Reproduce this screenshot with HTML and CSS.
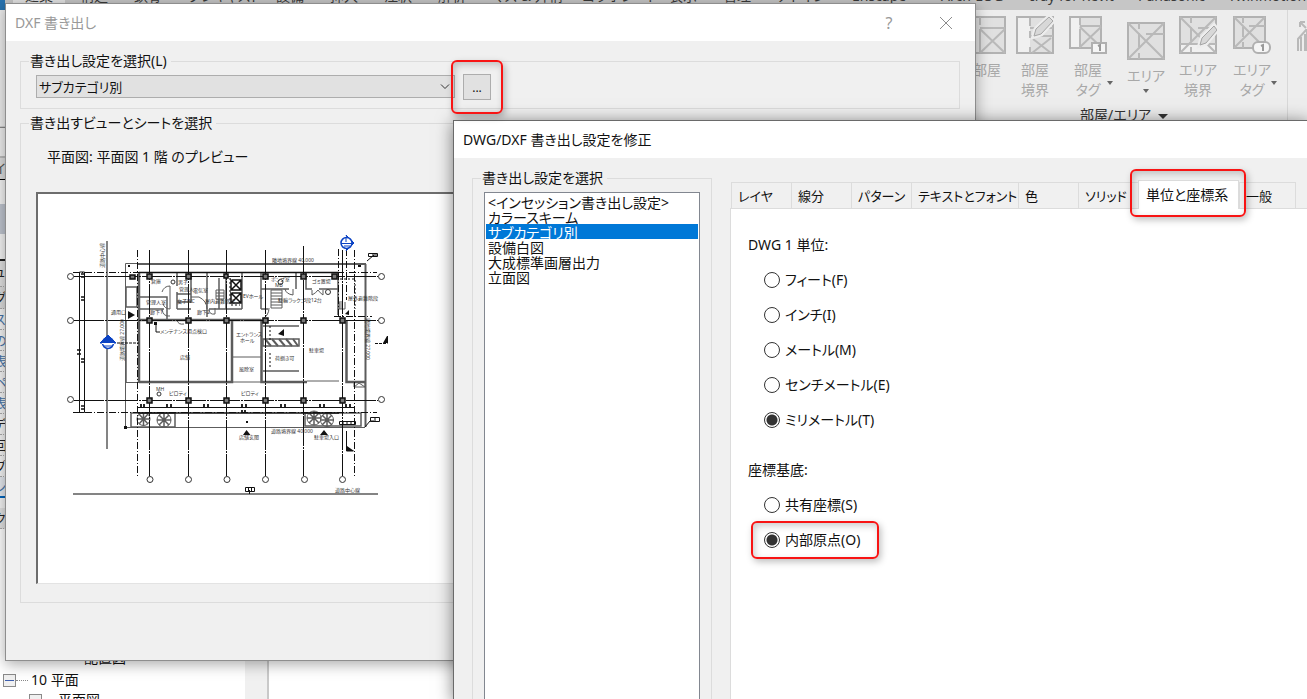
FILE: index.html
```html
<!DOCTYPE html>
<html lang="ja">
<head>
<meta charset="utf-8">
<title>DWG/DXF 書き出し設定を修正</title>
<link rel="stylesheet" href="styles.css">
</head>
<body>
<div class="desktop">
  <header class="ribbon">
    <nav class="ribbon-tabs"><div class="ribbon-tab-list">
      <a href="#" class="current">建築</a><a href="#">構造</a><a href="#">鉄骨</a><a href="#">プレキャスト</a><a href="#">設備</a><a href="#">挿入</a><a href="#">注釈</a><a href="#">解析</a><a href="#">マス &amp; 外構</a><a href="#">コラボレート</a><a href="#">表示</a><a href="#">管理</a><a href="#">アドイン</a><a href="#">Enscape</a><a href="#">Arch-LOG</a><a href="#">Iray for Revit</a><a href="#">Panasonic</a><a href="#">Twinmotion</a>
    </div></nav>
    <div class="ribbon-main">
      <div class="ribbon-group">
        <div class="tools">
          <button class="tool"><svg width="38" height="40" viewBox="0 0 38 40"><path class="plan" d="M1 1h36v36H1z"/><path class="wall" d="M12 1v8m0 4v24M12 12h25M12 13l25 24M37 13L12 37"/></svg><span>部屋</span></button>
          <button class="tool"><svg width="38" height="40" viewBox="0 0 38 40"><path class="plan" d="M1 1h36v36H1z"/><path class="pale" d="M2 2h12v34H2z"/><path class="wall" d="M14 2v8m0 5v7m0 9v6M14 12h23M14 20h23M17 23l18 14M35 22L16 37"/><path class="halo" d="M18 20l2-7L33 1l4 4-12 13z"/><path class="pencil" d="M18 20l2-7L33 1l4 4-12 13z"/></svg><span>部屋<br>境界</span></button>
          <button class="tool"><svg width="38" height="40" viewBox="0 0 38 40"><path class="plan" d="M1 1h31v31H1z"/><path class="pale" d="M2 2h8v29H2z"/><path class="wall" d="M11 2v7m0 4v19M11 10h21M11 11l21 20M32 11L11 31"/><path class="tag" d="M23 27h14v10H23z"/><path class="num" d="M29 30l2-1v6"/></svg><span>部屋<br>タグ</span><i></i></button>
          <button class="tool low"><svg width="38" height="40" viewBox="0 0 38 40"><path class="plan" d="M1 1h36v36H1z"/><path class="wall" d="M12 1v6m0 4v14m0 6v6M19 12h18M1 1l36 36M37 1L1 37"/></svg><span>エリア</span><i></i></button>
          <button class="tool"><svg width="38" height="40" viewBox="0 0 38 40"><path class="plan" d="M1 1h36v36H1z"/><path class="pale" d="M2 28h34v8H2z"/><path class="wall" d="M12 1v6m0 4v14m0 6v6M19 12h18M1 28h36M1 1l36 36M37 1L1 37"/><path class="halo" d="M21 29l2-7 12-12 3 4-11 13z"/><path class="pencil" d="M21 29l2-7 12-12 3 4-11 13z"/></svg><span>エリア<br>境界</span></button>
          <button class="tool"><svg width="38" height="40" viewBox="0 0 38 40"><path class="plan" d="M1 1h31v31H1z"/><path class="wall" d="M10 1v6m0 4v10m0 5v6M16 10h16M1 1l31 31M32 1L1 32"/><rect class="tag" x="20" y="26" width="17" height="11" rx="5"/><path class="num" d="M28 30l2-1v6"/></svg><span>エリア<br>タグ</span><i></i></button>
        </div>
        <div class="group-name">部屋/エリア <i></i></div>
      </div>
      <div class="ribbon-next"><svg width="13" height="60" viewBox="0 0 13 60"><path class="wall" d="M3 41V29l8-9h2M6 41V27m4 14V24m2 17V21M5 12h5M5 12v5M5 12l6 6"/></svg></div>
    </div>
  </header>

  <aside class="properties">
    <div class="prop-head">ー</div><div class="prop-bar">イ</div><div class="prop-view"></div><div class="prop-title">ュ</div>
    <div class="prop-row first">グ</div><div class="prop-row">ス</div><div class="prop-row">の</div><div class="prop-row">表</div><div class="prop-row">ペ</div><div class="prop-row">表</div><div class="prop-row dark">デ</div><div class="prop-row dark">回</div><div class="prop-row dark">プ</div><div class="prop-row link">ン</div><div class="prop-foot">ク</div>
  </aside>

  <section class="browser">
    <div class="tree">
      <div class="leaf">配置図</div>
      <div class="branch"><button class="toggle" aria-label="10 平面 を閉じる"></button><span class="dots"></span>10 平面</div>
      <div class="branch child"><button class="toggle" aria-label="平面図 を閉じる"></button>平面図</div>
    </div>
    <div class="gutter"></div>
  </section>

  <section class="dialog export" role="dialog" aria-labelledby="export-title">
    <div class="titlebar"><h2 id="export-title">DXF 書き出し</h2><button class="help" aria-label="ヘルプ">?</button><button class="close" aria-label="閉じる"><svg width="14" height="14" viewBox="0 0 14 14"><path d="M1 1l12 12M13 1L1 13" fill="none" stroke="#8c8c8c"/></svg></button></div>
    <div class="export-body">
      <fieldset class="setup">
        <legend><label for="setup">書き出し設定を選択(L)</label></legend>
        <select id="setup"><option>サブカテゴリ別</option></select>
        <span class="marked more"><button aria-label="設定を修正">...</button></span>
      </fieldset>
      <fieldset class="views">
        <legend>書き出すビューとシートを選択</legend>
        <p>平面図: 平面図 1 階 のプレビュー</p>
        <div class="preview">
<svg class="plan-view" width="416" height="391" viewBox="39 194 416 391" role="img" aria-label="平面図 1 階">
<g class="g">
<path d="M108 241V449M74 494H379" stroke-width="1.5"/>
<path d="M126.500 263.500H139M126.500 263.500V427.500H366M126.500 382.500H139"/>
<path d="M127 287H138V307H127zM127 320V382" stroke-width="1.500"/>
<path d="M139 264H367M366.500 264V382M366.500 382V427" stroke-width="2"/>
<path d="M140 273V383M140 320H233V382H140M262.500 320V382H308M347.500 320V382H366M232 320H262" stroke-width="2.500"/>
<path d="M233 357H262M233 382H262M308 381H340" stroke-width="1"/>
<path d="M178 273V286M178 292V309M192 273V303M208 273V317M220 278V309M227 273V309M140 297H168V320M140 309H165M178 294H192M178 302H192M178 309H192M210 309H243M243 273V309M262 273V309M262 289H290M297 273V289M307 273V289H313M320 289H339M339 273V315M262 309H269" stroke-width="1.500"/>
<path d="M163 292q2-6 8-6v23q-5 0-7-5M163 309q1 8 8 7M192 297h8q8 4 8 12M178 320q1 5 7 4M210 309q0 6 6 5v-6M262 320q8-4 8-12M286 289q1 5 8 6v-6M313 290v5q4-2 6-5 2 3 5 5v-5M355 382v5h11v-5M355 387l5-4 6 4"/>
<path d="M272 290H283V308H272zM272 293H283M272 296H283M272 299H283M272 302H283M272 305H283M217 290v9h8v-9zM217 293h8M217 296h8M340 302v7h6v-7M341 301v8M343 301v8"/>
<path d="M264 326H300M264 371H300M264 339H300V346H264z" stroke-width="1.500"/>
<path d="M266 339l6 7M273 339l6 7M280 339l6 7M287 339l6 7M294 339l5 7" stroke-width="2"/>
<path d="M132 413H176V427H132zM306 413H362V426H306z" stroke-width="1.500"/>
<circle cx="144.500" cy="419" r="6.500"/><circle cx="165" cy="420" r="7"/><circle cx="315" cy="418" r="7"/><circle cx="328" cy="420" r="6.500"/>
<path stroke-width="1.500" d="M138 419h13M144.500 412v14M140 414l9 10M149 414l-9 10M158 420h14M165 413v14M160 415l10 10M170 415l-10 10M308 418h14M315 411v14M310 413l10 10M320 413l-10 10M322 420h13M328 413v14M323 415l10 10M333 415l-10 10"/>
</g>
<g class="k">
<path class="dd" d="M150.500 250V476M189.500 250V476M227.500 250V476M266.500 250V476M304.500 246V476M343.500 250V476M75 276.500H379M75 320.500H379M75 400.500H379"/>
<path class="da" d="M138.500 250V478M339.500 249V318M347.500 249V300M355.500 250V478M74 272.500H378M74 412.500H378M335 316.500H373"/>
<path d="M80.500 272V412.500H85.500V272zM139 407.500H356"/>
<path d="M139 413H340M140 272.500H340" stroke-width="1.500"/>
<path d="M82 274h4m-4 3h4m-4 20h4m-4 3h4m-8 50h4m-4 4h4m0 5h4m-4 3h4m-4 44h4m-4 3h4" stroke-width="1.500"/>
<path d="M142 404v3m3-3v3m23-3v3m4-3v3m33-3v3m4-3v3m34-3v3m4-3v3m35-3v3m4-3v3m35-3v3m4-3v3m22-3v3m4-3v3M243 410v3m3-3v3" stroke-width="1.800"/>
<path d="M233 280H242V290H232V280l10 10m0-10l-10 10M233 293H242V303H232V293l10 10m0-10l-10 10" stroke-width="1.500"/>
<path d="M231 278V305H241M271 326V341M271 353V367M341 279H356V309" stroke-dasharray="2 2"/>
<path d="M118 343H140M376 343.500H388" stroke-dasharray="3 1"/>
<path d="M368 261l7-6h4M157 323v9h4M347.500 431v20h7M366 427l5-6h4M388.500 343.500V336M250.500 490v4"/>
<path d="M369.500 253.500h9v3h-9zM371.500 417.500h9v4h-9zM340.500 421.500h16v3h-16zM246.500 487.500h9v4h-9zM249.500 488v3M252.500 488v3M344 421v3M348 421v3M352 421v3M374 253v3M376 417v4"/>
<path fill="#111" stroke="none" d="M129 311v8l7-4zM279 334l6-5v7zM346 314l4-4v5zM244 435l3.500-5 4 5zM321 435l4-5 4 5zM348 446l7 5h-7zM388 336v7h-4zM129 265h2v2h-2zM359 265h3v2h-3zM247 421h2v2h-2zM155 322h3v3h-3zM125 426h3v3h-3z"/>
</g>
<g class="col"><path d="M148 274h5v5h-5zM187 274h5v5h-5zM225 274h4v4h-4zM264 274h5v5h-5zM302 274h5v5h-5zM333 274h5v5h-5zM148 318h5v5h-5zM187 318h5v5h-5zM225 318h5v5h-5zM264 318h5v5h-5zM302 318h5v5h-5zM341 318h5v5h-5zM148 398h5v5h-5zM187 398h5v5h-5zM225 398h5v5h-5zM264 398h5v5h-5zM302 398h5v5h-5zM341 398h5v5h-5zM131 275h5v4h-5z"/></g>
<g class="bub"><circle cx="71.500" cy="276.500" r="3"/><circle cx="71.500" cy="320.500" r="3"/><circle cx="71.500" cy="399.500" r="3"/><circle cx="382.500" cy="276.500" r="3"/><circle cx="382.500" cy="320.500" r="3"/><circle cx="382.500" cy="399.500" r="3"/><circle cx="151" cy="479.500" r="3"/><circle cx="189.500" cy="479.500" r="3"/><circle cx="228" cy="479.500" r="3"/><circle cx="266.500" cy="479.500" r="3"/><circle cx="305.500" cy="479.500" r="3"/><circle cx="343.500" cy="479.500" r="3"/><circle cx="160" cy="394" r="2"/><circle cx="174" cy="282" r="2"/><circle cx="281.500" cy="282" r="2.500"/><circle cx="329" cy="292" r="2.500"/></g>
<g class="sec"><circle cx="109" cy="343" r="5.500"/><path d="M101 343l8-8 8 8z"/><path class="o" d="M103 343.500h12"/><path class="b" d="M105 346h8"/><path d="M347 235l8 8-8 8 4-8z"/><circle cx="347.500" cy="243" r="5.500"/><path class="b" d="M342 243.500h13M345 246h6M347 238v4"/></g>
<g class="note">
<text x="273" y="262">隣地境界線 40.000</text><text x="152" y="283">倉庫</text><text x="147" y="304">管理人室</text><text x="151" y="314">廊下1</text><text x="198" y="314">廊下2</text><text x="112" y="314">通用口</text><text x="194" y="292">電気室</text><text x="179" y="284">男子</text><text x="180" y="291">管理人</text><text x="178" y="303">女子WC</text><text x="206" y="303">屋内避難階段</text><text x="244" y="298">EVホール</text><text x="272" y="281">ポンプ室</text><text x="276" y="287">MB</text><text x="313" y="283">ゴミ置場</text><text x="279" y="302">駐輪ラック：3段12台</text><text x="349" y="300">屋外避難階段</text><text x="161" y="333">メンテナンス用点検口</text><text x="181" y="359">店舗</text><text x="237" y="336">エントランス</text><text x="241" y="342">ホール</text><text x="240" y="371">風除室</text><text x="310" y="352">駐車場</text><text x="276" y="360">荷捌き可</text><text x="170" y="395">ピロティ</text><text x="242" y="395">ピロティ</text><text x="157" y="391">MH</text><text x="240" y="439">店舗玄関</text><text x="315" y="439">駐車場入口</text><text x="272" y="433">道路境界線 40.000</text><text x="336" y="492">道路中心線</text>
<text transform="translate(105 268) rotate(-90)">道路中心線</text><text transform="translate(125 361) rotate(-90)">道路境界線 27.000</text><text transform="translate(367 318) rotate(90)">隣地境界線 27.000</text>
</g>
</svg>
        </div>
      </fieldset>
    </div>
  </section>

  <section class="dialog modify" role="dialog" aria-labelledby="modify-title">
    <div class="titlebar"><h2 id="modify-title">DWG/DXF 書き出し設定を修正</h2></div>
    <div class="modify-body">
      <fieldset class="setups">
        <legend><label for="setups">書き出し設定を選択</label></legend>
        <select id="setups" size="30">
          <option>&lt;インセッション書き出し設定&gt;</option><option>カラースキーム</option><option selected>サブカテゴリ別</option><option>設備白図</option><option>大成標準画層出力</option><option>立面図</option>
        </select>
      </fieldset>
      <div class="settings">
        <div class="tabs" role="tablist">
          <button role="tab">レイヤ</button><button role="tab">線分</button><button role="tab">パターン</button><button role="tab" class="wide">テキストとフォント</button><button role="tab">色</button><button role="tab">ソリッド</button><span class="marked chosen"><button role="tab" aria-selected="true">単位と座標系</button></span><button role="tab">一般</button>
        </div>
        <div class="panel" role="tabpanel">
          <section class="choices" role="radiogroup" aria-labelledby="unit"><h3 id="unit">DWG 1 単位:</h3>
            <label><input type="radio" name="unit">フィート(F)</label><label><input type="radio" name="unit">インチ(I)</label><label><input type="radio" name="unit">メートル(M)</label><label><input type="radio" name="unit">センチメートル(E)</label><label><input type="radio" name="unit" checked>ミリメートル(T)</label>
          </section>
          <section class="choices" role="radiogroup" aria-labelledby="base"><h3 id="base">座標基底:</h3>
            <label><input type="radio" name="base">共有座標(S)</label><label class="marked origin"><input type="radio" name="base" checked>内部原点(O)</label>
          </section>
        </div>
      </div>
    </div>
  </section>
</div>
</body>
</html>
```
FILE: styles.css
```css
* { box-sizing: border-box; }
html, body { height: 100%; margin: 0; }
body, button, select, input {
  font-family: "Noto Sans", "Noto Sans CJK JP", sans-serif;
  font-size: 14px;
  font-feature-settings: "palt";
}
body { line-height: 20px; color: #111; }
button { padding: 0; border: 0; background: none; color: inherit; }
h2, h3, p { margin: 0; font-size: 14px; font-weight: 400; }
fieldset { margin: 0; padding: 0; min-width: 0; border: 1px solid #dcdcdc; }
legend { margin-left: 8px; padding: 0 4px 0 1px; line-height: 20px; }
a { color: inherit; text-decoration: none; }
.desktop { position: relative; height: 100%; overflow: hidden; background: #fff; }

/* Ribbon */
.ribbon { background: #ededed; }
.ribbon-tabs { height: 10px; overflow: hidden; background: #c6c6c6; border-left: 5px solid #2a74b0; }
.ribbon-tab-list {
  display: grid;
  grid-template-columns: 61px 54px 54px 88px 54px 54px 54px 54px 90px 87px 54px 54px 75px 89px 89px 108px 90px auto;
  margin-top: -14px; padding-left: 8px; white-space: nowrap; color: #3a3a3a;
}
.ribbon-tab-list a:not(.current) { padding-left: 6px; }
.ribbon-tab-list .current { width: 52px; padding-left: 12px; background: #e4e4e4; }
.ribbon-main { display: flex; justify-content: flex-end; height: 112px; }
.ribbon-group { width: 330px; border-right: 1px solid #d8d8d8; }
.tools { display: grid; grid-template-columns: 48px 53px 58px 52px 54px 38px; justify-content: end; padding: 6px 16px 0 0; height: 95px; }
.tool { position: relative; display: flex; flex-direction: column; align-items: center; width: 38px; height: 86px; line-height: 20px; color: #a8a8a8; white-space: nowrap; }
.tool svg { margin-bottom: 4px; flex: none; }
.tool.low { margin-top: 6px; }
.tool i { position: absolute; right: -6px; top: 65px; border: 3px solid transparent; border-top: 4px solid #666; border-bottom: 0; }
.tool.low i { right: 16px; top: 67px; }
.group-name { padding-left: 122px; color: #333; white-space: nowrap; }
.group-name i { display: inline-block; margin-left: 3px; border: 5px solid transparent; border-top-color: #333; border-bottom: 0; vertical-align: 1px; }
.ribbon-next { width: 19px; padding-left: 7px; }
.plan { fill: #e0e0e0; stroke: #b2b2b2; stroke-width: 2; }
.pale { fill: #f0f0f0; }
.wall { fill: none; stroke: #b9b9b9; stroke-width: 2; }
.halo { fill: none; stroke: #ededed; stroke-width: 5; }
.pencil { fill: #d8d8d8; stroke: #a5a5a5; stroke-width: 1; }
.tag { fill: #f5f5f5; stroke: #b0b0b0; stroke-width: 2; }
.num { fill: none; stroke: #999; stroke-width: 2; }

/* Palettes behind the dialogs */
.properties { width: 200px; background: #f4f4f4; color: #4773a8; font-size: 13px; }
.properties > div { height: 21px; overflow: hidden; text-indent: -6px; border-bottom: 1px dotted #aaa; }
.properties .prop-head { height: 36px; border-bottom: 2px solid #bbb; background: #eee; color: #888; line-height: 10px; }
.properties .prop-bar { height: 22px; border-bottom: 1px solid #000; background: #ddd; color: #555; }
.properties .prop-view { height: 81px; border-bottom: 2px solid #222; background: linear-gradient(#f4f4f4 0 24px, #bfc5cf 24px 54px, #f4f4f4 54px); }
.properties .prop-title { height: 26px; background: #e2e2e2; color: #222; }
.properties .prop-row.first { background: #ddd; color: #222; height: 22px; }
.properties .prop-row.dark { color: #222; }
.properties .prop-row.link { background: #e5e9ef; border-bottom: 2px solid #0065bd; }
.properties .prop-foot { margin-top: 10px; background: #e3e3e3; color: #222; }
.browser { position: absolute; left: 0; right: 0; bottom: 0; height: 51px; display: flex; background: #fff; }
.tree { width: 245px; overflow: hidden; }
.gutter { width: 24px; background: #f0f0f0; border-right: 2px solid #c9c9c9; }
.leaf { height: 22px; padding-left: 84px; }
.branch { display: flex; align-items: center; height: 20px; padding-left: 3px; }
.child { padding-left: 29px; gap: 16px; }
.toggle { width: 13px; height: 13px; border: 1px solid #8a8a8a; background: linear-gradient(#3e5fae, #3e5fae) center/9px 1px no-repeat, #f0f0f0; }
.dots { width: 12px; margin-right: 3px; border-top: 1px dotted #888; }

/* Dialog windows */
.dialog { position: absolute; display: flex; flex-direction: column; background: #f0f0f0; border: 1px solid #8e8e8e; }
.export { left: 5px; top: 3px; right: 331px; bottom: 38px; box-shadow: 0 3px 14px rgba(0,0,0,.35); }
.modify { left: 453px; top: 120px; right: -2px; bottom: -2px; border-color: #6a6a6a; box-shadow: 0 2px 16px rgba(0,0,0,.5); }
.titlebar { display: flex; align-items: center; flex: none; height: 37px; padding-left: 9px; background: #fff; }
.titlebar h2 { flex: 1; }
.export .titlebar h2, .help { color: #999; }
.help { width: 20px; margin-right: 40px; font-size: 16px; }
.close { display: flex; width: 14px; margin-right: 22px; }
.export-body { display: flex; flex-direction: column; flex: 1; min-height: 0; padding: 10px 15px 57px 14px; }
.setup { display: flex; flex: none; height: 58px; }
.setup select { width: 419px; height: 23px; margin: 4px 8px 0 15px; padding: 0 8px 0 2px; font-size: 13px; line-height: 20px; border: 1px solid #adadad; border-radius: 0; color: #111; appearance: none; background: #e1e1e1 url("data:image/svg+xml,%3Csvg xmlns='http://www.w3.org/2000/svg' width='10' height='6'%3E%3Cpath d='M1 0.500l4 4 4-4' fill='none' stroke='%23333'/%3E%3C/svg%3E") right 4px center no-repeat; }
.marked { position: relative; }
.marked::after { content: ""; position: absolute; z-index: 2; border: 2px solid #f81414; border-radius: 6px; box-shadow: 2px 3px 7px rgba(0,0,0,.25), inset 2px 3px 7px rgba(0,0,0,.2); pointer-events: none; }
.more { width: 28px; height: 26px; margin-top: 3px; }
.more button { width: 28px; height: 26px; border: 1px solid #adadad; background: #e1e1e1; font-size: 12px; }
.more::after { inset: -14px -12px -14px -12px; }
.views { display: flex; flex-direction: column; flex: 1; min-height: 0; margin-top: 4px; }
.views p { margin: 14px 0 25px 26px; }
.preview { flex: 1; min-height: 0; margin: 0 15px 18px 15px; border: 2px solid; border-color: #6d6d6d #e3e3e3 #e3e3e3 #6d6d6d; border-bottom-width: 1px; background: #fff; overflow: hidden; }
.modify-body { display: flex; flex: 1; min-height: 0; padding-left: 18px; }
.setups { flex: none; display: flex; width: 240px; margin-top: 10px; border-bottom: 0; }
.setups select { width: 216px; margin: 4px 0 0 11px; padding: 1px; border: 1px solid #828790; border-radius: 0; outline: 0; overflow: hidden; background: #fff; color: #111; }
.setups option { display: flex; align-items: center; height: 15px; min-height: 15px; padding: 0 2px; font-size: 14px; overflow: visible; }
.setups option:checked { background: #0078d7 linear-gradient(#0078d7, #0078d7); color: #fff; }
.settings { display: flex; flex-direction: column; flex: 1; min-width: 0; padding: 23px 0 0 18px; }
.tabs { display: flex; align-items: flex-end; height: 27px; padding-left: 1px; }
.tabs button { flex: none; width: 60px; height: 26px; padding-left: 6px; font-size: 13px; text-align: left; white-space: nowrap; border: 1px solid #dcdcdc; border-width: 1px 0 0 1px; }
.tabs .wide { width: 107px; }
.tabs > button:last-child { width: 57px; border-right-width: 1px; }
.tabs .chosen { flex: none; width: 101px; height: 29px; margin-bottom: -1px; }
.tabs .chosen button { width: 101px; height: 29px; padding: 0 0 3px 7px; font-size: 14px; background: #fff; border-right-width: 1px; }
.chosen::after { inset: -11px -7px -8px -8px; }
.panel { flex: 1; padding: 19px 17px; border: 1px solid #dcdcdc; background: #fff; }
.choices { display: flex; flex-direction: column; align-items: flex-start; margin-bottom: 16px; }
.choices h3 { line-height: 34px; }
.choices label { display: flex; align-items: center; gap: 5px; height: 35px; margin-left: 16px; }
.choices input { appearance: none; width: 16px; height: 16px; margin: 0; border: 1px solid #333; border-radius: 50%; background: #fff; }
.choices input:checked { background: radial-gradient(circle, #333 0 5px, #fff 6px); }
.origin::after { inset: -1px -19px -2px -13px; }

/* Floor plan */
.plan-view { display: block; }
.plan-view .g { fill: none; stroke: #5c5c5c; }
.plan-view .k { fill: none; stroke: #111; }
.dd { stroke-dasharray: 30 1 2 1; }
.da { stroke-dasharray: 7 2 1 2; }
.col { fill: #777; stroke: #111; stroke-width: 1.5; }
.bub { fill: #fff; stroke: #333; }
.sec { fill: #0b43c4; stroke: #0b43c4; }
.sec circle { fill: #fff; stroke-width: 1.5; }
.sec .o { stroke: #fff; }
.sec .b { fill: none; }
.note { font-size: 5px; fill: #333; }
```
